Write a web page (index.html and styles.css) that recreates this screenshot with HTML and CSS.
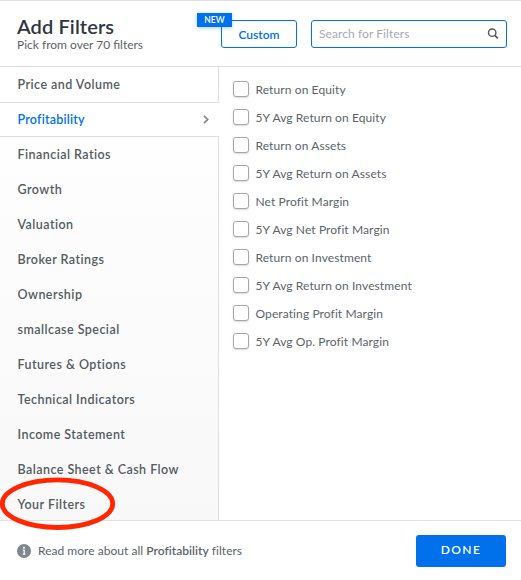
FILE: index.html
```html
<!DOCTYPE html>
<html lang="en">
    <head>
        <meta charset="UTF-8">
        <title>Add Filters</title>
        <link rel="stylesheet" href="styles.css">
    </head>
    <body>
        <div class="modal">
            <header class="header">
                <div class="heading">
                    <h1 class="title">Add Filters</h1>
                    <p class="subtitle">Pick from over 70 filters</p>
                </div>
                <button class="custom"><span class="badge">NEW</span>Custom</button>
                <div class="search">
                    <input class="search-input" type="text" placeholder="Search for Filters">
                    <svg class="search-icon" width="12" height="12" viewBox="0 0 12 12">
                        <circle cx="5.2" cy="4.7" r="3.7" fill="none" stroke="#535b62" stroke-width="1.4"/>
                        <path d="M7.9 7.4L10.8 10.3" stroke="#535b62" stroke-width="1.8"/>
                    </svg>
                </div>
            </header>
            <div class="content">
                <ul class="menu">
                    <li class="item">Price and Volume</li>
                    <li class="item active">Profitability
                        <svg width="6" height="9" viewBox="0 0 6 9">
                            <path d="M1 0.8L4.7 4.5L1 8.2" fill="none" stroke="#81878c" stroke-width="1.7"/>
                        </svg>
                    </li>
                    <li class="item">Financial Ratios</li>
                    <li class="item">Growth</li>
                    <li class="item">Valuation</li>
                    <li class="item">Broker Ratings</li>
                    <li class="item">Ownership</li>
                    <li class="item">smallcase Special</li>
                    <li class="item">Futures &amp; Options</li>
                    <li class="item">Technical Indicators</li>
                    <li class="item">Income Statement</li>
                    <li class="item">Balance Sheet &amp; Cash Flow</li>
                    <li class="item">Your Filters</li>
                </ul>
                <div class="filters">
                    <label class="filter"><input class="check" type="checkbox">Return on Equity</label>
                    <label class="filter"><input class="check" type="checkbox">5Y Avg Return on Equity</label>
                    <label class="filter"><input class="check" type="checkbox">Return on Assets</label>
                    <label class="filter"><input class="check" type="checkbox">5Y Avg Return on Assets</label>
                    <label class="filter"><input class="check" type="checkbox">Net Profit Margin</label>
                    <label class="filter"><input class="check" type="checkbox">5Y Avg Net Profit Margin</label>
                    <label class="filter"><input class="check" type="checkbox">Return on Investment</label>
                    <label class="filter"><input class="check" type="checkbox">5Y Avg Return on Investment</label>
                    <label class="filter"><input class="check" type="checkbox">Operating Profit Margin</label>
                    <label class="filter"><input class="check" type="checkbox">5Y Avg Op. Profit Margin</label>
                </div>
            </div>
            <footer class="footer">
                <svg class="info" width="14" height="14" viewBox="0 0 14 14">
                    <circle cx="7" cy="7" r="7" fill="#81878c"/>
                    <circle cx="7" cy="3.8" r="1" fill="#fff"/>
                    <path d="M5.8 6H7.2V10.2M5.8 10.2H8.4" fill="none" stroke="#fff" stroke-width="1.2"/>
                </svg>
                <p class="more">Read more about all <b>Profitability</b> filters</p>
                <button class="done">DONE</button>
            </footer>
            <svg class="marker" width="118" height="56" viewBox="0 0 118 56">
                <ellipse cx="58.5" cy="27.7" rx="55.2" ry="23.8" fill="none" stroke="#ff2600" stroke-width="4.8"/>
            </svg>
        </div>
    </body>
</html>
```
FILE: styles.css
```css
* {
    box-sizing: border-box;
}
body {
    margin: 0;
    font-family: Lato, "Liberation Sans", sans-serif;
    color: #5b636a;
    background: #fff;
}
h1, p, ul {
    margin: 0;
    padding: 0;
}
button {
    font-family: inherit;
}
.modal {
    position: relative;
    display: flex;
    flex-direction: column;
    height: 580px;
    overflow: hidden;
    border-top: 1px solid #dddfe0;
}
.header {
    display: flex;
    align-items: flex-start;
    height: 66px;
    padding: 13px 14px 0 17px;
    border-bottom: 1px solid #dddfe0;
}
.heading {
    width: 204px;
}
.title {
    font-size: 20px;
    line-height: 24px;
    font-weight: 600;
    letter-spacing: 0.1px;
    color: #2f363f;
}
.subtitle {
    font-size: 12px;
    line-height: 14px;
    letter-spacing: 0;
}
.custom {
    position: relative;
    width: 76px;
    height: 28px;
    margin-top: 6px;
    padding: 0;
    border: 1px solid #0070eb;
    border-radius: 3px;
    background: #fff;
    color: #0070eb;
    font-size: 12px;
    font-weight: 600;
    letter-spacing: 0;
}
.badge {
    position: absolute;
    top: -8px;
    left: -25px;
    width: 35px;
    height: 14px;
    background: #0070eb;
    box-shadow: 0 1px 4px rgba(0, 112, 235, 0.35);
    color: #fff;
    font-size: 8.5px;
    line-height: 14px;
    letter-spacing: 0.1px;
    text-align: center;
}
.search {
    display: flex;
    align-items: center;
    width: 196px;
    height: 28px;
    margin: 6px 0 0 14px;
    padding: 0 7px;
    border: 1px solid #0070eb;
    border-radius: 3px;
}
.search-input {
    flex: 1;
    min-width: 0;
    padding: 0 0 2px;
    border: 0;
    outline: 0;
    font-family: inherit;
    font-size: 12px;
    letter-spacing: 0.08px;
}
.search-input::placeholder {
    color: #a5aaaf;
}
.content {
    display: flex;
    height: 453px;
    overflow: hidden;
}
.menu {
    width: 219px;
    height: 455px;
    list-style: none;
    border-right: 1px solid #dddfe0;
    background: linear-gradient(#fff, #f8f8f8);
}
.item {
    height: 35px;
    padding-left: 17.5px;
    line-height: 35px;
    font-size: 12.5px;
    font-weight: 600;
    letter-spacing: 0.45px;
    color: #535b62;
}
.active {
    display: flex;
    align-items: center;
    justify-content: space-between;
    margin-right: -1px;
    padding-right: 10px;
    line-height: 32px;
    letter-spacing: 0.2px;
    border-top: 1px solid #dddfe0;
    border-bottom: 1px solid #dddfe0;
    background: #fff;
    color: #0070eb;
}
.filters {
    display: flex;
    flex-direction: column;
    padding: 8px 0 0 14px;
}
.filter {
    display: flex;
    align-items: center;
    height: 28px;
    font-size: 12px;
    letter-spacing: 0.1px;
}
.check {
    appearance: none;
    width: 16px;
    height: 16px;
    margin: 0 6.5px 0 0;
    border: 1px solid #a4a8ac;
    border-radius: 3px;
    background: #fff;
    box-shadow: 0 1px 2px rgba(0, 0, 0, 0.15);
}
.footer {
    display: flex;
    align-items: center;
    height: 60px;
    padding: 0 15px 0 17px;
    border-top: 1px solid #dddfe0;
}
.more {
    margin-left: 7px;
    font-size: 12px;
    letter-spacing: 0.03px;
}
.more b {
    font-weight: 600;
}
.done {
    width: 90px;
    height: 32px;
    margin-left: auto;
    padding: 0 0 2px;
    border: 0;
    border-radius: 3px;
    background: #0070eb;
    color: #fff;
    font-size: 12px;
    font-weight: 600;
    letter-spacing: 1.4px;
}
/* hand drawn ring round the last menu item */
.marker {
    position: absolute;
    left: -1px;
    top: 475px;
}
```
